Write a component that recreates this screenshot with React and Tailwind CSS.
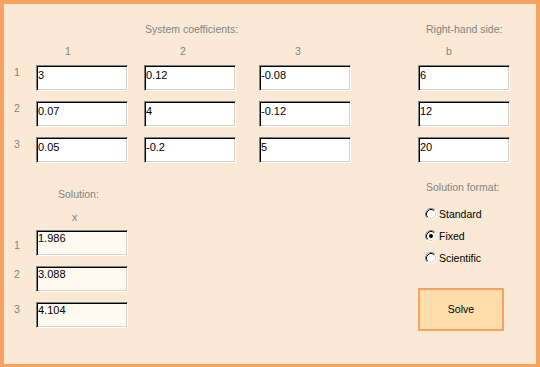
import React, { useState } from 'react';

const coefficients = [
  ['3', '0.12', '-0.08'],
  ['0.07', '4', '-0.12'],
  ['0.05', '-0.2', '5'],
];
const rhs = ['6', '12', '20'];
const solution = ['1.986', '3.088', '4.104'];
const formats = ['Standard', 'Fixed', 'Scientific'];

const sunken =
  'h-[26px] w-[92px] border border-t-[#808080] border-l-[#808080] border-r-white border-b-white shadow-[inset_1px_1px_0_#000,inset_-1px_-1px_0_#d4d0c8] pl-[1px] text-[11px] leading-[13px] text-black';

/**
 * Campo de texto afundado, no estilo clássico do Windows.
 */
const Field = ({ value, className = '', solved = false }) => (
  <div className={`${sunken} ${solved ? 'bg-[#fffaf0] pt-[1px]' : 'bg-white pt-[3px]'} ${className}`}>
    {value}
  </div>
);

const Label = ({ children, className = '' }) => (
  <div className={`text-[10.5px] leading-[12px] text-[#838383] ${className}`}>{children}</div>
);

/**
 * Botão de rádio clássico desenhado em SVG.
 */
const RadioDot = ({ checked }) => (
  <svg width="12" height="12" viewBox="0 0 12 12" className="shrink-0">
    <circle cx="6" cy="6" r="5.5" fill="#fff" />
    <path d="M2.11 9.89 A5.5 5.5 0 0 1 9.89 2.11" fill="none" stroke="#808080" strokeWidth="1" />
    <path d="M9.89 2.11 A5.5 5.5 0 0 1 2.11 9.89" fill="none" stroke="#ffffff" strokeWidth="1" />
    <path d="M2.82 9.18 A4.5 4.5 0 0 1 9.18 2.82" fill="none" stroke="#000" strokeWidth="1" />
    <path d="M9.18 2.82 A4.5 4.5 0 0 1 2.82 9.18" fill="none" stroke="#d4d0c8" strokeWidth="1" />
    {checked && <circle cx="6" cy="6" r="2" fill="#000" />}
  </svg>
);

const App = () => {
  const [format, setFormat] = useState('Fixed');

  return (
    <div
      className="w-[540px] h-[367px] border-4 border-b-[3px] border-[#f4a460] bg-[#fae9d5] overflow-hidden"
      style={{ fontFamily: '"Liberation Sans", Arial, sans-serif' }}
    >
      {/* Coeficientes do sistema e lado direito */}
      <section className="pt-[19px]">
        <div className="flex">
          <Label className="ml-[141px] w-[273px]">System coefficients:</Label>
          <Label className="ml-[8px]">Right-hand side:</Label>
        </div>
        <div className="flex mt-[10px] ml-[32px]">
          <Label className="w-[92px] pl-[29px]">1</Label>
          <Label className="w-[92px] ml-[16px] pl-[36px]">2</Label>
          <Label className="w-[92px] ml-[23px] pl-[36px]">3</Label>
          <Label className="w-[92px] ml-[67px] pl-[28px]">b</Label>
        </div>
        <div className="flex flex-col gap-[10px] mt-[8px]">
          {coefficients.map((row, i) => (
            <div key={i} className="flex">
              <Label className="w-[32px] pl-[10px] pt-[1px]">{i + 1}</Label>
              <Field value={row[0]} />
              <Field value={row[1]} className="ml-[16px]" />
              <Field value={row[2]} className="ml-[23px]" />
              <Field value={rhs[i]} className="ml-[67px]" />
            </div>
          ))}
        </div>
      </section>

      <section className="flex items-start">
        {/* Solução */}
        <div className="w-[124px] mt-[25px]">
          <Label className="pl-[54px]">Solution:</Label>
          <Label className="pl-[68px] mt-[11px]">x</Label>
          <div className="flex flex-col gap-[10px] mt-[7px]">
            {solution.map((v, i) => (
              <div key={i} className="flex">
                <Label className={`w-[32px] pl-[10px] ${i === 0 ? 'pt-[9px]' : i === 1 ? 'pt-[2px]' : 'pt-[1px]'}`}>
                  {i + 1}
                </Label>
                <Field value={v} solved />
              </div>
            ))}
          </div>
        </div>

        {/* Formato da solução */}
        <div className="ml-[290px] mt-[18px] w-[92px]">
          <Label className="pl-[8px] whitespace-nowrap">Solution format:</Label>
          <div className="mt-[10px] pl-[7px]">
            {formats.map((f) => (
              <button
                key={f}
                onClick={() => setFormat(f)}
                className="flex items-center gap-[2px] h-[22px] text-[10.5px] leading-[12px] text-black"
              >
                <RadioDot checked={format === f} />
                <span>{f}</span>
              </button>
            ))}
          </div>
          <button className="mt-[19px] w-[86px] h-[43px] border-2 border-[#f4a460] bg-[#ffdeab] text-[10.5px] text-black">
            Solve
          </button>
        </div>
      </section>
    </div>
  );
};

export default App;
